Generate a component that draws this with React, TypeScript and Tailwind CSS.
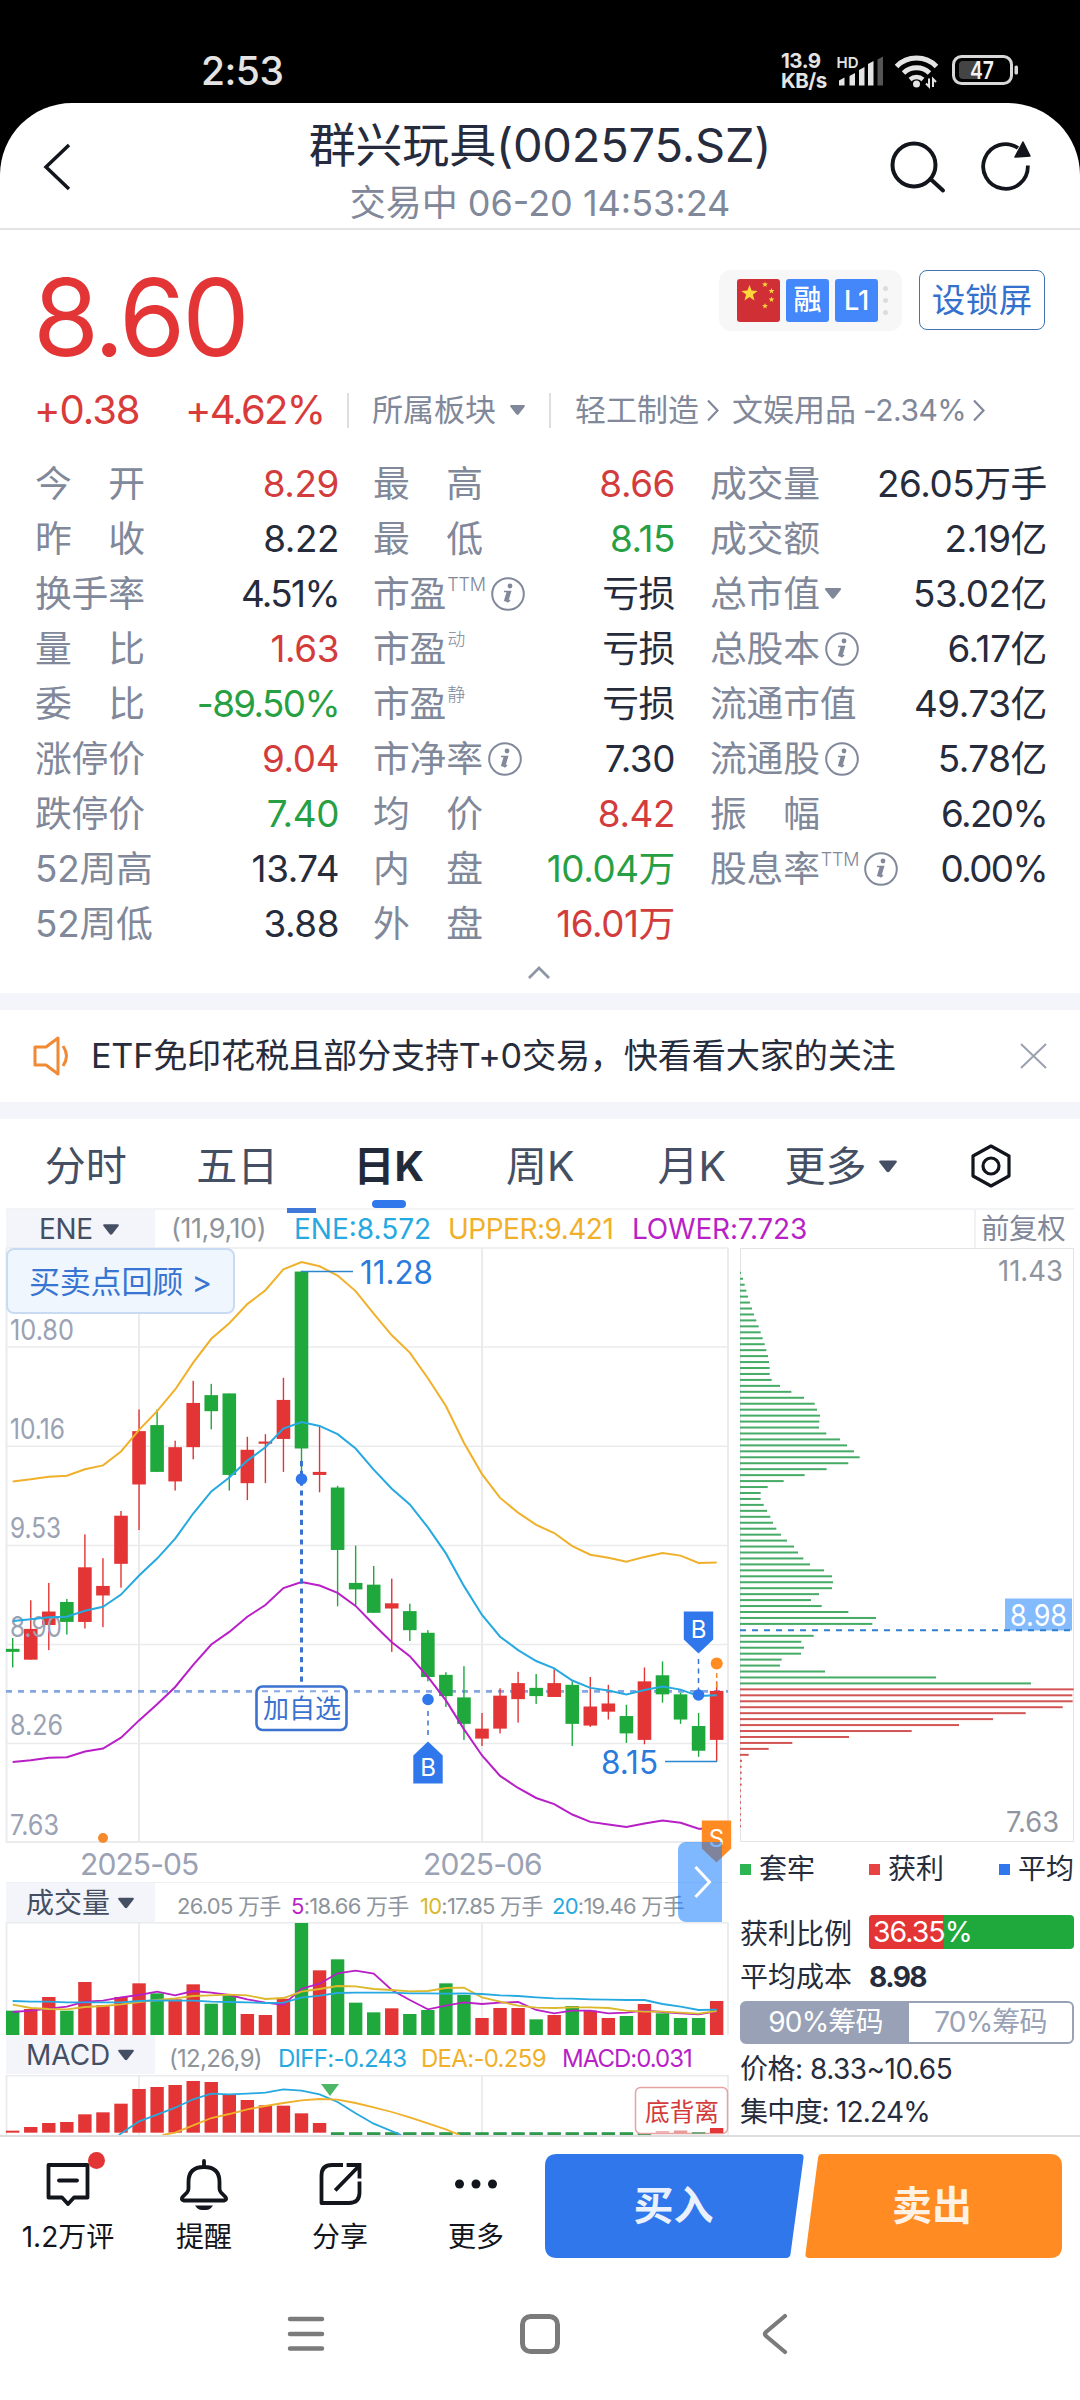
import type { ReactNode } from "react";

const GREEN = "#1fa93d";
const RED = "#e33535";
const UPPER = "#f0b02a";
const MID = "#26a9e0";
const LOWER = "#b81fc6";

/* ---------- shared chart helpers ---------- */

const cx = (i: number) => 12.7 + 18.05 * i;
const priceY = (v: number) => 1200 + v / 2.306;
const volY = (v: number) => 1860 + v / 3;
const line = (values: number[], y: (v: number) => number) =>
  values.map((v, i) => `${cx(i).toFixed(1)},${y(v).toFixed(1)}`).join(" ");

type LabelProps = {
  x: number;
  y: number;
  w: number;
  s: number;
  fill: string;
  children: string;
};

/* Text with its left edge at x, centred on y, and set to width w. */
function Label({ x, y, w, s, fill, children }: LabelProps) {
  return (
    <text x={x} y={y + s * 0.364} fontSize={s} fill={fill} textLength={w} lengthAdjust="spacingAndGlyphs">
      {children}
    </text>
  );
}

/* ---------- status bar ---------- */

function StatusBar() {
  return (
    <div className="flex h-[103px] items-center bg-black pt-[38px] pl-[201px] text-[#e4e4e4]">
      <div className="w-[580px] text-[39px] leading-[40px] font-medium tracking-[-0.5px]">2:53</div>
      <div className="w-[54px] text-[20.500px] leading-[20px] font-bold tracking-[-0.500px]">
        <div>13.9</div>
        <div>KB/s</div>
      </div>
      <svg className="h-[34px] w-[50px]" viewBox="0 0 50 34">
        <text x="1.500" y="13.500" fontSize="15" fontWeight="600" fill="#e4e4e4" textLength="22">HD</text>
        <path d="M4 31.500v-5l5.500-3v8z" fill="#e4e4e4" />
        <path d="M14.500 31.500v-9.500l5.500-3v12.500z" fill="#e4e4e4" />
        <path d="M24 31.500v-15.500l5.500-3v18.500z" fill="#e4e4e4" />
        <path d="M33 31.500v-21.500l5.500-3v24.500z" fill="#e4e4e4" />
        <path d="M42.500 31.500V5.500l5.500-3v29z" fill="#555" />
      </svg>
      <svg className="ml-[9px] h-[36px] w-[46px]" viewBox="0 0 46 36" fill="none" stroke="#e4e4e4" strokeWidth="5">
        <path d="M2.500 13.500a28 28 0 0 1 40 0" />
        <path d="M9.500 20a19 19 0 0 1 26 0" />
        <path d="M16 26.500a10 10 0 0 1 13 0" strokeWidth="4.500" />
        <circle cx="22.500" cy="31" r="3.500" fill="#e4e4e4" stroke="none" />
        <path d="M35 25.500v8l-3-3M39 34v-8l3 3" strokeWidth="2" />
      </svg>
      <svg className="ml-[12px] h-[32px] w-[68px]" viewBox="0 0 68 32">
        <rect x="1.500" y="1.500" width="58" height="27" rx="8" fill="none" stroke="#d8d8d8" strokeWidth="3" />
        <path d="M11 6h15v18H11a4 4 0 0 1-4-4V10a4 4 0 0 1 4-4z" fill="#444" />
        <rect x="62.500" y="10.500" width="3.500" height="9" rx="1.500" fill="#d8d8d8" />
        <text x="18" y="24" fontSize="24" fontWeight="600" fill="#f2f2f2" textLength="24" lengthAdjust="spacingAndGlyphs">47</text>
      </svg>
    </div>
  );
}

/* ---------- title bar ---------- */

function TitleBar() {
  return (
    <div className="flex h-[127px] items-start border-b-2 border-[#e3e4e6] pl-[40px]">
      <svg className="mt-[38px] h-[52px] w-[36px]" viewBox="0 0 36 52" fill="none" stroke="#12151c" strokeWidth="3.500">
        <path d="M29 4 6 26l23 22" />
      </svg>
      <div className="ml-[120px] w-[688px] text-center">
        <div className="mt-[14px] text-[47px] leading-[56px] tracking-[-0.200px] text-[#262c3d]">群兴玩具(002575.SZ)</div>
        <div className="mt-[8px] text-[36px] leading-[44px] text-[#80889a]">交易中 06-20 14:53:24</div>
      </div>
      <svg className="mt-[36px] h-[56px] w-[58px] overflow-visible" viewBox="0 0 58 56" fill="none" stroke="#12151c" strokeWidth="4">
        <circle cx="30" cy="26" r="21.500" />
        <path d="m46.500 40 12.500 11.500" strokeLinecap="round" />
      </svg>
      <svg className="mt-[36px] ml-[34px] h-[56px] w-[56px]" viewBox="0 0 56 56" fill="none" stroke="#12151c" strokeWidth="3.800">
        <path d="M51.800 26.500A22.300 22.300 0 1 1 42 9" />
        <path d="m47 3-8 15 15-1z" fill="#12151c" strokeWidth="1.500" strokeLinejoin="round" />
      </svg>
    </div>
  );
}

/* ---------- quote ---------- */

function Star({ x, y, r }: { x: number; y: number; r: number }) {
  const points = Array.from({ length: 10 }, (_, i) => {
    const a = (Math.PI / 5) * i - Math.PI / 2;
    const d = i % 2 ? r * 0.42 : r;
    return `${(x + d * Math.cos(a)).toFixed(1)},${(y + d * Math.sin(a)).toFixed(1)}`;
  }).join(" ");
  return <polygon points={points} fill="#ffd93b" />;
}

function Caret({ className }: { className: string }) {
  return (
    <svg className={className} viewBox="0 0 18 12" fill="currentColor">
      <path d="M1.500 0h15q2 .3 1 2L10.500 11q-1.500 1.600-3 0L.5 2q-1-1.700 1-2z" />
    </svg>
  );
}

function Chevron({ className }: { className: string }) {
  return (
    <svg className={className} viewBox="0 0 12 22" fill="none" stroke="#80889a" strokeWidth="2.200">
      <path d="m1 1 9.500 10L1 21" />
    </svg>
  );
}

function Quote() {
  return (
    <div className="h-[225px] pl-[36px]">
      <div className="flex h-[152px]">
        <div className="mt-[27px] -ml-[3px] w-[686px] text-[107px] leading-[120px] tracking-[-3px] text-[#e33535]">8.60</div>
        <div className="mt-[40px] flex h-[61px] w-[183px] items-center rounded-xl bg-[#f7f7f8] pl-[18px]">
          <svg className="h-[43px] w-[43px]" viewBox="0 0 43 43">
            <rect width="43" height="43" rx="3" fill="#d03035" />
            <Star x={12.5} y={14.500} r={8.500} />
            <Star x={28} y={5.500} r={3} />
            <Star x={34.500} y={12} r={3} />
            <Star x={34.500} y={20.500} r={3} />
            <Star x={28} y={27} r={3} />
          </svg>
          <div className="ml-[6px] h-[43px] w-[43px] rounded-[3px] bg-[#4387fb] text-center text-[28px] leading-[43px] font-medium text-white">融</div>
          <div className="ml-[6px] h-[43px] w-[43px] rounded-[3px] bg-[#4387fb] text-center text-[27px] leading-[43px] font-medium text-white">L1</div>
          <div className="ml-[5px] flex flex-col gap-[7px]">
            <div className="h-[5px] w-[5px] rounded-full bg-[#dcdcde]" />
            <div className="h-[5px] w-[5px] rounded-full bg-[#dcdcde]" />
            <div className="h-[5px] w-[5px] rounded-full bg-[#dcdcde]" />
          </div>
        </div>
        <div className="mt-[40px] ml-[17px] h-[60px] w-[126px] rounded-lg border border-[#3f74b0] text-center text-[33.500px] leading-[58px] text-[#3471cc]">
          设锁屏
        </div>
      </div>
      <div className="flex h-[56px] items-center text-[31px] leading-[56px] text-[#80889a]">
        <div className="-ml-[2px] w-[151px] text-[40px] tracking-[-1px] text-[#d93a3a]">+0.38</div>
        <div className="w-[162px] text-[40px] tracking-[-1.800px] text-[#d93a3a]">+4.62%</div>
        <div className="h-[35px] w-[2px] bg-[#dcdee2]" />
        <div className="ml-[23px] w-[124px]">所属板块</div>
        <Caret className="ml-[14px] h-[10px] w-[15px]" />
        <div className="ml-[24px] h-[35px] w-[2px] bg-[#dcdee2]" />
        <div className="ml-[24px] w-[124px]">轻工制造</div>
        <Chevron className="ml-[8px] h-[23px] w-[12px]" />
        <div className="ml-[13px] w-[124px]">文娱用品</div>
        <div className="ml-[7px] w-[110px] text-[30px] tracking-[-0.500px]">-2.34%</div>
        <Chevron className="h-[23px] w-[12px]" />
      </div>
    </div>
  );
}

/* ---------- statistics ---------- */

type Stat = { label: string; value: string; tone?: "up" | "down"; sup?: string; info?: boolean; caret?: boolean };

const STATS: Stat[][] = [
  [
    { label: "今　开", value: "8.29", tone: "up" },
    { label: "昨　收", value: "8.22" },
    { label: "换手率", value: "4.51%" },
    { label: "量　比", value: "1.63", tone: "up" },
    { label: "委　比", value: "-89.50%", tone: "down" },
    { label: "涨停价", value: "9.04", tone: "up" },
    { label: "跌停价", value: "7.40", tone: "down" },
    { label: "52周高", value: "13.74" },
    { label: "52周低", value: "3.88" },
  ],
  [
    { label: "最　高", value: "8.66", tone: "up" },
    { label: "最　低", value: "8.15", tone: "down" },
    { label: "市盈", sup: "TTM", info: true, value: "亏损" },
    { label: "市盈", sup: "动", value: "亏损" },
    { label: "市盈", sup: "静", value: "亏损" },
    { label: "市净率", info: true, value: "7.30" },
    { label: "均　价", value: "8.42", tone: "up" },
    { label: "内　盘", value: "10.04万", tone: "down" },
    { label: "外　盘", value: "16.01万", tone: "up" },
  ],
  [
    { label: "成交量", value: "26.05万手" },
    { label: "成交额", value: "2.19亿" },
    { label: "总市值", caret: true, value: "53.02亿" },
    { label: "总股本", info: true, value: "6.17亿" },
    { label: "流通市值", value: "49.73亿" },
    { label: "流通股", info: true, value: "5.78亿" },
    { label: "振　幅", value: "6.20%" },
    { label: "股息率", sup: "TTM", info: true, value: "0.00%" },
  ],
];

function Info() {
  return (
    <svg className="ml-[5px] h-[34px] w-[34px]" viewBox="0 0 34 34">
      <circle cx="17" cy="17" r="15.800" fill="none" stroke="#80889a" strokeWidth="2" />
      <circle cx="19" cy="9" r="2.400" fill="#80889a" />
      <path d="M13 14.500h6.500l-3 10q0 1 2.500-1.500" fill="none" stroke="#80889a" strokeWidth="1.500" />
      <path d="m17.500 14.500-3 10" stroke="#80889a" strokeWidth="3.400" />
    </svg>
  );
}

function StatRow({ stat }: { stat: Stat }) {
  const tone = stat.tone === "up" ? "text-[#d33c3c]" : stat.tone === "down" ? "text-[#279f43]" : "text-[#262c3b]";
  const tracking = stat.value.endsWith("%") ? "tracking-[-1.600px]" : "tracking-[-0.400px]";
  return (
    <div className="flex h-[55px] items-center justify-between leading-[55px] whitespace-nowrap">
      <div className="flex items-center text-[#80889a]">
        {stat.label}
        {stat.sup && <span className="-mt-[17px] ml-px text-[18px] leading-[20px] font-light">{stat.sup}</span>}
        {stat.info && <Info />}
        {stat.caret && <Caret className="ml-[4px] h-[11px] w-[18px]" />}
      </div>
      <div className={`${tone} ${tracking}`}>{stat.value}</div>
    </div>
  );
}

function Stats() {
  return (
    <div className="h-[538px] pt-px">
      <div className="flex pl-[35px] text-[36.800px] tracking-[-0.200px]">
        <div className="w-[304px]">{STATS[0].map((s) => <StatRow key={s.label} stat={s} />)}</div>
        <div className="ml-[34px] w-[302px]">{STATS[1].map((s, i) => <StatRow key={i} stat={s} />)}</div>
        <div className="ml-[35px] w-[337px]">{STATS[2].map((s) => <StatRow key={s.label} stat={s} />)}</div>
      </div>
      <svg className="mt-[14px] ml-[528px] h-[16px] w-[22px]" viewBox="0 0 22 16" fill="none" stroke="#8e95a5" strokeWidth="2.800">
        <path d="m1 13 10-10 10 10" />
      </svg>
    </div>
  );
}

/* ---------- notice and period tabs ---------- */

function Notice() {
  return (
    <div className="flex h-[92px] items-center">
      <svg className="ml-[32px] h-[42px] w-[40px]" viewBox="0 0 40 42" fill="none" stroke="#f08a35" strokeWidth="3" strokeLinejoin="round">
        <path d="M3 12h11L26 3v36L14 30H3z" />
        <path d="M31 11q7 10 0 20" />
      </svg>
      <div className="ml-[19px] w-[929px] text-[34.200px] leading-[50px] tracking-[-0.220px] text-[#262c3b]">
        ETF免印花税且部分支持T+0交易，快看看大家的关注
      </div>
      <svg className="h-[26px] w-[27px]" viewBox="0 0 27 26" fill="none" stroke="#9aa1b0" strokeWidth="2">
        <path d="m1 1 25 24M26 1 1 25" />
      </svg>
    </div>
  );
}

function Tabs() {
  const tab = "w-[151.500px] text-center";
  return (
    <div className="relative flex h-[89px] items-center pt-[5px] pl-[10px] text-[41px] leading-[60px] text-[#454f63]">
      <div className={tab}>分时</div>
      <div className={tab}>五日</div>
      <div className="w-[151.500px] text-center font-bold text-[#222a3a]">日K</div>
      <div className={tab}>周K</div>
      <div className={tab}>月K</div>
      <div className="ml-[17px] w-[82px]">更多</div>
      <Caret className="ml-[12px] h-[13px] w-[18px]" />
      <svg className="ml-[73px] h-[44px] w-[42px]" viewBox="0 0 42 44" fill="none" stroke="#12151c" strokeWidth="3.200" strokeLinejoin="round">
        <path d="M21 2 39 12v20L21 42 3 32V12z" />
        <circle cx="21" cy="22" r="8" />
      </svg>
      <div className="absolute top-[81px] left-[372px] h-[8px] w-[34px] rounded-full bg-[#2f77ea]" />
    </div>
  );
}

function IndicatorBar() {
  return (
    <div className="relative ml-[6px] flex h-[40px] w-[1068px] items-center border-t-2 border-[#f3f4f6] text-[28px] leading-[38px] tracking-[-0.400px]">
      <div className="flex h-full w-[149px] items-center bg-[#f4f5fa] pl-[33px] text-[#454f63]">
        <div className="w-[64px]">ENE</div>
        <Caret className="h-[11px] w-[16px]" />
      </div>
      <div className="ml-[16px] w-[123px] text-[27px] text-[#8d949b]">(11,9,10)</div>
      <div className="w-[154px] tracking-[0px] text-[#26a9e0]">ENE:8.572</div>
      <div className="w-[184px] tracking-[-0.500px] text-[#f0b02a]">UPPER:9.421</div>
      <div className="w-[342px] tracking-[-0.200px] text-[#b81fc6]">LOWER:7.723</div>
      <div className="h-full border-l-2 border-[#f0f1f4] pl-[5px] text-[28.500px] text-[#80889a]">前复权</div>
      <div className="absolute -top-[2px] left-[281px] h-[5px] w-[29px] bg-[#3f78d8]" />
    </div>
  );
}

/* ---------- candlestick chart ---------- */

type Candle = ["r" | "g", number, number, number, number];

const CANDLES: Candle[] = [
  ["g", 1010, 1035, 1042, 1078], ["r", 923, 989, 1060, 1060], ["r", 883, 949, 980, 1038], ["g", 920, 927, 973, 1002],
  ["r", 771, 847, 973, 988], ["r", 826, 890, 912, 985], ["r", 717, 728, 839, 894], ["r", 483, 533, 656, 761],
  ["g", 483, 519, 627, 627], ["r", 555, 570, 649, 670], ["r", 417, 468, 570, 598], ["g", 424, 450, 487, 529],
  ["g", 446, 446, 634, 670], ["r", 546, 576, 653, 692], ["r", 540, 557, 562, 653], ["r", 410, 461, 551, 627],
  ["g", 163, 165, 573, 640], ["r", 521, 627, 634, 674], ["g", 659, 663, 807, 937], ["g", 797, 883, 898, 935],
  ["g", 844, 887, 952, 952], ["r", 873, 930, 942, 1042], ["g", 931, 948, 992, 1017], ["g", 992, 998, 1100, 1110],
  ["g", 1089, 1095, 1144, 1169], ["g", 1075, 1147, 1208, 1245], ["r", 1183, 1219, 1242, 1259], ["r", 1126, 1143, 1219, 1230],
  ["r", 1088, 1114, 1151, 1205], ["g", 1093, 1125, 1144, 1162], ["r", 1082, 1114, 1146, 1146], ["g", 1110, 1118, 1208, 1259],
  ["r", 1100, 1168, 1212, 1215], ["r", 1118, 1161, 1180, 1198], ["g", 1164, 1190, 1230, 1252], ["r", 1078, 1110, 1245, 1255],
  ["g", 1064, 1096, 1140, 1159], ["g", 1136, 1140, 1198, 1208], ["g", 1183, 1213, 1270, 1284], ["r", 1110, 1132, 1245, 1295],
];

const UPPER_LINE = [649, 644, 638, 636, 621, 612, 580, 530, 487, 437, 375, 320, 284, 240, 208, 160, 143, 153, 174, 210, 262, 312, 352, 411, 475, 560, 632, 687, 721, 749, 768, 798, 818, 825, 834, 823, 814, 820, 837, 836];
const MID_LINE = [971, 967, 962, 961, 947, 938, 910, 866, 827, 781, 723, 672, 640, 601, 570, 527, 512, 521, 540, 573, 622, 666, 702, 755, 815, 890, 957, 1007, 1038, 1063, 1080, 1108, 1125, 1131, 1140, 1130, 1122, 1129, 1144, 1142];
const LOWER_LINE = [1296, 1292, 1286, 1285, 1272, 1265, 1240, 1200, 1163, 1123, 1072, 1025, 996, 961, 934, 895, 881, 889, 906, 936, 979, 1020, 1052, 1100, 1154, 1220, 1281, 1328, 1356, 1379, 1393, 1417, 1434, 1440, 1446, 1438, 1431, 1436, 1450, 1450];

const AXIS = [
  { text: "10.80", y: 1329.7, w: 63 },
  { text: "10.16", y: 1428.5, w: 54 },
  { text: "9.53", y: 1527.4, w: 50 },
  { text: "8.90", y: 1626.7, w: 51 },
  { text: "8.26", y: 1725, w: 52 },
  { text: "7.63", y: 1825, w: 48 },
];

function Marker({ x, y, up, fill, children }: { x: number; y: number; up?: boolean; fill: string; children: string }) {
  const d = up ? "M0-21 14.700-7V21h-29.400V-7z" : "M0 21 14.700 7v-28h-29.400V7z";
  return (
    <g transform={`translate(${x} ${y})`}>
      <path d={d} fill={fill} />
      <text y={up ? 13 : 5.500} fontSize="24" fill="#fff" textAnchor="middle">{children}</text>
    </g>
  );
}

function CandleChart() {
  return (
    <svg className="block h-[594px] w-[740px] overflow-visible" viewBox="0 1248 740 594">
      <g stroke="#eaebed" strokeWidth="1.500">
        <path d="M6 1248H728M6 1347H728M6 1446.300H728M6 1545.600H728M6 1644.500H728M6 1743.400H728" />
        <path d="M6 1842H728" strokeWidth="2" />
        <path d="M6.500 1248V1842M139 1248V1842M482 1248V1842M728 1248V1842" strokeWidth="2" />
      </g>
      <path d={`M6 ${priceY(1133)}H728`} stroke="#86a6e3" strokeWidth="2.800" strokeDasharray="6 6" />
      {CANDLES.map(([c, hi, top, bot, lo], i) => (
        <g key={i} fill={c === "r" ? RED : GREEN}>
          <rect x={cx(i) - 0.7} y={priceY(hi)} width="1.400" height={(lo - hi) / 2.306} />
          <rect x={cx(i) - 6.8} y={priceY(top)} width="13.600" height={(bot - top) / 2.306} />
        </g>
      ))}
      {AXIS.map((a) => (
        <Label key={a.text} x={10} y={a.y} w={a.w + 1} s={28} fill="#9aa2b3">{a.text}</Label>
      ))}
      <g fill="none" strokeWidth="2">
        <polyline points={line(UPPER_LINE, priceY)} stroke={UPPER} />
        <polyline points={line(MID_LINE, priceY)} stroke={MID} />
        <polyline points={line(LOWER_LINE, priceY)} stroke={LOWER} />
      </g>

      <path d="M302 1271.500H353" stroke="#2a86cf" strokeWidth="1.500" />
      <Label x={360} y={1272.4} w={73} s={32} fill="#2a7bdc">11.28</Label>
      <path d="M665 1761.600H717" stroke="#2a86cf" strokeWidth="1.500" />
      <Label x={601} y={1762} w={57} s={32} fill="#2a7bdc">8.15</Label>

      <path d="M301.500 1461V1685" stroke="#3a72d0" strokeWidth="3" strokeDasharray="5.200 4.600" />
      <circle cx="301.500" cy="1479" r="5.800" fill="#2f77ea" />
      <rect x="256.500" y="1686.500" width="90" height="43.500" rx="6" fill="#fff" stroke="#3a72d0" strokeWidth="2.600" />
      <path d={`M262 ${priceY(1133)}H342`} stroke="#86a6e3" strokeWidth="2" strokeDasharray="6 6" />
      <Label x={263} y={1708.500} w={78} s={26} fill="#3a72d0">加自选</Label>
      <circle cx="103" cy="1838" r="5" fill="#f5892d" />

      <circle cx="428" cy="1699.500" r="5.800" fill="#2f77ea" />
      <path d="M428 1711V1738" stroke="#3a72d0" strokeWidth="1.500" strokeDasharray="5 4.500" />
      <Marker x={428} y={1762.500} up fill="#2f77ea">B</Marker>

      <path d="M698.500 1659V1690" stroke="#3a72d0" strokeWidth="1.500" strokeDasharray="5 4.500" />
      <circle cx="698.500" cy="1695" r="5.800" fill="#2f77ea" />
      <Marker x={698.5} y={1632.500} fill="#2f77ea">B</Marker>

      <path d="M716.700 1673V1692" stroke="#f5892d" strokeWidth="1.500" strokeDasharray="5 4.500" />
      <circle cx="716.700" cy="1663.500" r="6" fill="#ff8b22" />
      <Marker x={716.5} y={1841.500} fill="#ff8b22">S</Marker>
    </svg>
  );
}

/* ---------- volume and MACD ---------- */

const VOLUME = [452, 447, 411, 452, 366, 435, 411, 370, 400, 418, 373, 431, 406, 462, 465, 416, 189, 331, 298, 428, 457, 445, 462, 450, 370, 405, 474, 444, 444, 478, 465, 438, 452, 474, 468, 432, 460, 474, 474, 423];
const MA5 = [456, 452, 446, 440, 425, 422, 412, 405, 395, 406, 393, 398, 405, 418, 428, 434, 386, 371, 340, 332, 341, 390, 420, 448, 437, 427, 432, 428, 426, 450, 460, 452, 452, 460, 458, 452, 456, 460, 463, 454];
const MA10 = [434, 444, 447, 448, 441, 438, 433, 426, 420, 415, 408, 406, 404, 406, 417, 414, 395, 387, 378, 379, 387, 390, 394, 393, 384, 383, 412, 425, 437, 443, 444, 442, 442, 444, 452, 455, 455, 458, 461, 453];
const MA20 = [423, 425, 425, 427, 427, 427, 427, 423, 421, 422, 422, 425, 426, 427, 429, 428, 413, 407, 399, 398, 398, 398, 400, 400, 401, 400, 402, 406, 408, 412, 415, 416, 418, 419, 420, 420, 432, 440, 450, 449];

function VolumeChart() {
  return (
    <svg className="block h-[113px] w-[740px]" viewBox="0 1922 740 113">
      <path d="M6 1922.500H728M6.500 1922V2035M139 1922V2035M482 1922V2035M728 1922V2035" stroke="#eaebed" strokeWidth="1.800" fill="none" />
      {VOLUME.map((v, i) => (
        <rect key={i} x={cx(i) - 6.7} y={volY(v)} width="13.400" height={(525 - v) / 3} fill={CANDLES[i][0] === "r" ? RED : GREEN} />
      ))}
      <g fill="none" strokeWidth="1.800">
        <polyline points={line(MA5, volY)} stroke={LOWER} />
        <polyline points={line(MA10, volY)} stroke="#dcb92c" />
        <polyline points={line(MA20, volY)} stroke={MID} />
      </g>
    </svg>
  );
}

const MACD = [812, 801, 789, 786, 763, 757, 731, 687, 681, 675, 663, 666, 705, 720, 736, 737, 760, 789];
const DIFF = [784, 764, 743, 718, 701, 703, 701, 698, 688, 692, 703, 726, 760, 791];
const DEA = [818, 796, 774, 762, 748, 738, 729, 721, 717, 719, 729, 742, 756, 772, 790, 808];

function MacdChart() {
  const pts = (v: number[], from: number) => v.map((p, i) => `${cx(i + from).toFixed(1)},${volY(p).toFixed(1)}`).join(" ");
  return (
    <svg className="block h-[60px] w-[740px]" viewBox="0 2075 740 60">
      <path d="M6 2075.500H728M6.500 2075V2135M139 2075V2135M482 2075V2135M728 2075V2135" stroke="#eaebed" strokeWidth="1.800" fill="none" />
      {MACD.map((v, i) => (
        <rect key={i} x={cx(i) - 6.7} y={volY(v)} width="13.400" height={(818 - v) / 3} fill={RED} />
      ))}
      {Array.from({ length: 18 }, (_, i) => (
        <rect key={i} x={cx(i + 18) - 6.7} y="2132.200" width="13.400" height="2.800" fill="#2f9a4b" />
      ))}
      <polyline points={`118.800,2135 ${pts(DIFF, 7)} 401.200,2135`} fill="none" stroke={MID} strokeWidth="1.800" />
      <polyline points={`162.500,2135 ${pts(DEA, 9)} 459.700,2135`} fill="none" stroke={UPPER} strokeWidth="1.800" />
      <path d="M321 2084h18l-9 12z" fill="#4cb865" />
      <rect x="635.500" y="2087.500" width="92" height="46" rx="5" fill="#fff" stroke="#e7a3a3" strokeWidth="1.500" />
      <rect x={cx(36) - 6.7} y="2131" width="13.400" height="2" fill="#f0b5b5" />
      <rect x={cx(37) - 6.7} y="2130.500" width="13.400" height="2.500" fill="#e89a9a" />
      <rect x={cx(38) - 6.7} y="2132" width="13.400" height="2" fill="#7aa77f" />
      <rect x={cx(39) - 6.7} y="2128" width="13.400" height="5" fill={RED} />
      <Label x={645} y={2112} w={74} s={25} fill="#d43c3c">底背离</Label>
    </svg>
  );
}

function SubHeader({ title, children }: { title: string; children: ReactNode }) {
  return (
    <div className="ml-[6px] flex h-[39px] w-[722px] items-center whitespace-nowrap">
      <div className="flex h-full w-[149px] shrink-0 items-center bg-[#f4f5fa] text-[28px] leading-[38px] text-[#454f63]">
        <div className="w-[112px] pl-[20px]">{title}</div>
        <Caret className="h-[12px] w-[16px]" />
      </div>
      {children}
    </div>
  );
}

function LeftCharts() {
  return (
    <div className="relative w-[740px]">
      <CandleChart />
      <div className="flex h-[40px] items-center pt-[3px] text-[30px] leading-[40px] tracking-[-0.900px] text-[#9aa2b3]">
        <div className="ml-[80px] w-[343px]">2025-05</div>
        <div>2025-06</div>
      </div>
      <div className="ml-[6px] h-px w-[722px] bg-[#eef0f3]" />
      <SubHeader title="成交量">
        <div className="flex pt-[6px] pl-[22px] text-[22px] leading-[32px] tracking-[-0.750px] text-[#8d949b]">
          <div className="w-[114px]">26.05 万手</div>
          <div className="w-[129px]"><span className="text-[#b81fc6]">5</span>:18.66 万手</div>
          <div className="w-[132px]"><span className="text-[#d9b92c]">10</span>:17.85 万手</div>
          <div><span className="text-[#26a9e0]">20</span>:19.46 万手</div>
        </div>
      </SubHeader>
      <VolumeChart />
      <div className="h-[40px]">
        <SubHeader title="MACD">
          <div className="flex pt-[8px] pl-[14px] text-[24px] leading-[32px] tracking-[-0.700px]">
            <div className="w-[109px] text-[#8d949b]">(12,26,9)</div>
            <div className="w-[143px] text-[#26a9e0]">DIFF:-0.243</div>
            <div className="w-[141px] text-[#f0b02a]">DEA:-0.259</div>
            <div className="tracking-[-1px] text-[#b81fc6]">MACD:0.031</div>
          </div>
        </SubHeader>
      </div>
      <MacdChart />
      <div className="absolute top-0 left-[6px] h-[66px] w-[229px] rounded-lg border-2 border-[#c8dbf3] bg-[#eff6fe] pl-[21px] text-[31px] leading-[63px] tracking-[-0.200px] text-[#3875d3]">
        买卖点回顾 &gt;
      </div>
      <div className="absolute top-[594px] left-[678px] flex h-[80px] w-[44px] items-center justify-center rounded-l-lg bg-[#167eff]/55">
        <svg className="ml-[5px] h-[34px] w-[18px]" viewBox="0 0 18 34" fill="none" stroke="#fff" strokeWidth="3">
          <path d="m1.500 2 14 15-14 15" />
        </svg>
      </div>
    </div>
  );
}

/* ---------- cost distribution ---------- */

const TRAPPED = [33, 39, 44, 49, 54, 60, 66, 72, 79, 86, 92, 98, 104, 109, 114, 117, 119, 119, 125, 150, 184, 222, 254, 261, 270, 268, 267, 289, 330, 351, 372, 389, 355, 290, 224, 161, 113, 92, 92, 101, 111, 121, 129, 139, 153, 171, 192, 204, 220, 240, 282, 306, 309, 306, 267, 243, 275, 355, 438, 427, 30, 251, 214, 222, 213, 155, 150, 285, 618, 903];
const PROFIT = [1031, 1027, 1028, 998, 887, 789, 687, 545, 357, 187, 116, 56, 36, 35, 35, 35, 35, 33, 33, 33, 33, 33, 33, 33];

function CostChart() {
  const y = (i: number) => 1272.8 + i * 5.951;
  const w = (v: number) => Math.max(0, (v - 30) / 3);
  return (
    <svg className="block h-[594px] w-[334px]" viewBox="740 1248 334 594">
      <rect x="740.500" y="1248.500" width="333" height="593" fill="none" stroke="#e3e4e6" />
      {TRAPPED.map((v, i) => (
        <rect key={i} x="740" y={y(i) - 1} width={w(v)} height="2" fill="#45ab66" />
      ))}
      {PROFIT.map((v, i) => (
        <rect key={i} x="740" y={y(i + TRAPPED.length) - 1} width={w(v)} height="2" fill="#d35454" />
      ))}
      <rect x="1005" y="1598.500" width="67" height="32" fill="#84bbfd" />
      <path d="M740 1630.200H1072" stroke="#2f7fd0" strokeWidth="2" strokeDasharray="6 6" />
      <Label x={1010} y={1615.500} w={57} s={30} fill="#fff">8.98</Label>
      <Label x={998} y={1270.700} w={65} s={28} fill="#8f969f">11.43</Label>
      <Label x={1006} y={1821.600} w={53} s={28} fill="#8f969f">7.63</Label>
    </svg>
  );
}

function RightPanel() {
  return (
    <div className="w-[334px] text-[28px] text-[#262c3b]">
      <CostChart />
      <div className="flex h-[54px] items-center leading-[54px]">
        <div className="h-[11px] w-[11px] bg-[#2eb553]" />
        <div className="ml-[8px] w-[110px]">套牢</div>
        <div className="h-[11px] w-[11px] bg-[#e84343]" />
        <div className="ml-[8px] w-[111px]">获利</div>
        <div className="h-[11px] w-[11px] bg-[#2f77ea]" />
        <div className="ml-[8px] whitespace-nowrap">平均</div>
      </div>
      <div className="mt-[18px] flex h-[36px] items-center leading-[36px]">
        <div className="w-[129px] pt-[3px]">获利比例</div>
        <div className="relative h-[34px] w-[205px] overflow-hidden rounded bg-[#1fa93d]">
          <div className="h-full w-[75px] bg-[#e33535]" />
          <div className="absolute top-0 left-[4px] text-[28.500px] leading-[34px] tracking-[-1px] text-white">36.35%</div>
        </div>
      </div>
      <div className="mt-[5px] flex h-[44px] items-center leading-[44px]">
        <div className="w-[129px]">平均成本</div>
        <div className="text-[28px] font-bold tracking-[-1.500px]">8.98</div>
      </div>
      <div className="mt-[2px] flex h-[43px] rounded-md border-2 border-[#98a1b5] text-center leading-[39px] tracking-[-0.800px] text-[#98a1b5]">
        <div className="w-[167px] bg-[#98a1b5] text-white">90%筹码</div>
        <div className="flex-1">70%筹码</div>
      </div>
      <div className="mt-[4px] leading-[43px] tracking-[-0.500px]">
        <div>价格: 8.33~10.65</div>
        <div className="tracking-[-0.800px]">集中度: 12.24%</div>
      </div>
    </div>
  );
}

/* ---------- bottom bar ---------- */

function Action({ label, children }: { label: string; children: ReactNode }) {
  return (
    <div className="flex w-[136px] flex-col items-center text-[28px] leading-[36px] whitespace-nowrap text-[#12151c]">
      <svg className="mt-[18px] h-[64px] w-[66px] overflow-visible" viewBox="0 0 66 64" fill="none" stroke="#12151c" strokeWidth="3.800">
        {children}
      </svg>
      <div>{label}</div>
    </div>
  );
}

function BottomBar() {
  return (
    <div className="flex h-[125px] border-t-2 border-[#dcdee1]">
      <Action label="1.2万评">
        <path d="M13.500 10h39v32.500H39L33 49l-6-6.500H13.500z" strokeLinejoin="round" />
        <path d="M24 25.500h18" strokeLinecap="round" />
        <circle cx="61.500" cy="5.500" r="8.500" fill="#e33535" stroke="none" />
      </Action>
      <Action label="提醒">
        <path d="M33 6v6M13 45.500h40q3.500-.5 1.500-3.500l-4.500-4.500q-1.500-1.500-1.500-4V27q0-15-15.500-15T17.500 27v6.500q0 2.500-1.500 4L11.500 42q-2 3 1.500 3.500z" strokeLinejoin="round" strokeLinecap="round" />
        <path d="M24 50.500h18q-3 4.500-7 4.500h-4q-4 0-7-4.500z" fill="#12151c" stroke="none" />
      </Action>
      <Action label="分享">
        <path d="M36 10H25q-10.500 0-10.500 10.500V48H42q10.500 0 10.500-10.500V26.500" strokeLinejoin="round" />
        <path d="M29.500 34 51 12M41.500 10h11v11.500" strokeLinecap="square" />
      </Action>
      <Action label="更多">
        <g fill="#12151c" stroke="none">
          <circle cx="16.500" cy="29" r="4.500" />
          <circle cx="33" cy="29" r="4.500" />
          <circle cx="49.500" cy="29" r="4.500" />
        </g>
      </Action>
      <div className="relative mt-[17px] ml-px h-[104px] w-[517px]">
        <svg className="h-full w-full" viewBox="0 0 517 104">
          <path d="M12 0H255q4 0 3.500 4L245.500 100q-.5 4-4.500 4H12Q0 104 0 92V12Q0 0 12 0z" fill="#2f77ea" />
          <path d="M277 0H505q12 0 12 12v80q0 12-12 12H264q-4 0-3.500-4L273 4q.5-4 4-4z" fill="#ff8b22" />
        </svg>
        <div className="absolute inset-0 flex text-[40px] leading-[104px] font-bold text-[#eaf1fd]">
          <div className="w-[257px] text-center">买入</div>
          <div className="w-[260px] text-center text-[#fff1e4]">卖出</div>
        </div>
      </div>
    </div>
  );
}

function NavBar() {
  return (
    <div className="flex h-[140px] items-center pt-[8px] pl-[286px]">
      <svg className="h-[44px] w-[40px]" viewBox="0 0 40 44" fill="none" stroke="#7b7b7b" strokeWidth="4.500" strokeLinecap="round">
        <path d="M4 7h32M4 22h32M4 36.500h32" />
      </svg>
      <svg className="ml-[192px] h-[44px] w-[44px]" viewBox="0 0 44 44" fill="none" stroke="#7b7b7b" strokeWidth="5">
        <rect x="4.500" y="4.500" width="35" height="35" rx="8" />
      </svg>
      <svg className="ml-[198px] h-[44px] w-[30px]" viewBox="0 0 30 44" fill="none" stroke="#7b7b7b" strokeWidth="4.200" strokeLinecap="round" strokeLinejoin="round">
        <path d="M25 4 6 20q-2 2 0 4l19 16" />
      </svg>
    </div>
  );
}

export default function App() {
  return (
    <div className="h-[2400px] w-[1080px] overflow-hidden bg-black font-['Inter','Noto_Sans_CJK_SC',sans-serif]">
      <StatusBar />
      <div className="h-[2297px] rounded-t-[72px] bg-white">
        <TitleBar />
        <Quote />
        <Stats />
        <div className="h-[17px] bg-[#f4f5fa]" />
        <Notice />
        <div className="h-[17px] bg-[#f4f5fa]" />
        <Tabs />
        <IndicatorBar />
        <div className="flex">
          <LeftCharts />
          <RightPanel />
        </div>
        <BottomBar />
        <NavBar />
      </div>
    </div>
  );
}
